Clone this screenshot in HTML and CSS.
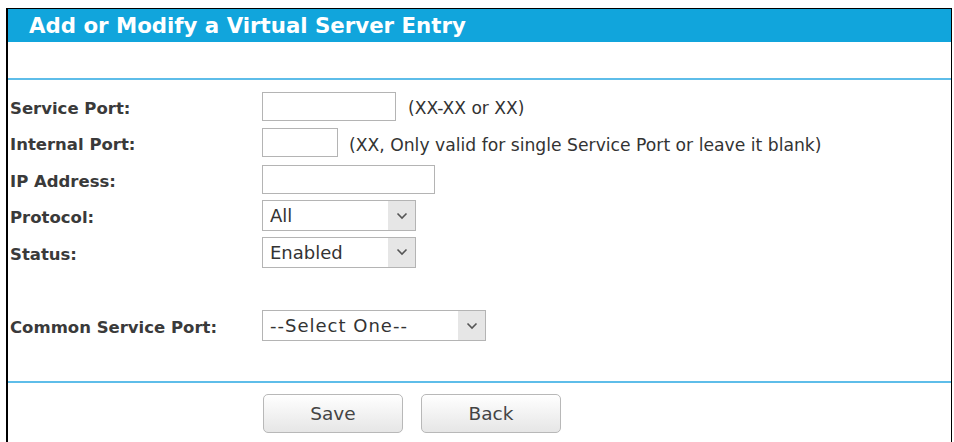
FILE: index.html
```html
<!DOCTYPE html>
<html lang="en">
<head>
  <meta charset="UTF-8">
  <title>Add or Modify a Virtual Server Entry</title>
  <link rel="stylesheet" href="styles.css">
</head>
<body>

  <div class="frame">
    <div class="title">Add or Modify a Virtual Server Entry</div>
    <div class="spacer"></div>

    <form class="entry-form">
      <div class="row">
        <label for="svcPort">Service Port:</label>
        <input type="text" id="svcPort" class="txt w-svc">
        <span class="hint">(XX-XX or XX)</span>
      </div>
      <div class="row">
        <label for="inPort">Internal Port:</label>
        <input type="text" id="inPort" class="txt w-in">
        <span class="hint long">(XX, Only valid for single Service Port or leave it blank)</span>
      </div>
      <div class="row">
        <label for="ipAddr">IP Address:</label>
        <input type="text" id="ipAddr" class="txt w-ip">
      </div>
      <div class="row">
        <label for="protocol">Protocol:</label>
        <span class="sel w-proto">
          <select id="protocol">
            <option>All</option>
            <option>TCP</option>
            <option>UDP</option>
          </select>
          <span class="arrow"><svg width="12" height="8" viewBox="0 0 12 8"><path d="M1.5 1.5 L6 6 L10.5 1.5" fill="none" stroke="#555" stroke-width="1.6"/></svg></span>
        </span>
      </div>
      <div class="row">
        <label for="status">Status:</label>
        <span class="sel w-proto">
          <select id="status">
            <option>Enabled</option>
            <option>Disabled</option>
          </select>
          <span class="arrow"><svg width="12" height="8" viewBox="0 0 12 8"><path d="M1.5 1.5 L6 6 L10.5 1.5" fill="none" stroke="#555" stroke-width="1.6"/></svg></span>
        </span>
      </div>

      <div class="row common">
        <label for="common">Common Service Port:</label>
        <span class="sel w-common">
          <select id="common" class="spaced">
            <option>--Select One--</option>
            <option>DNS</option>
            <option>FTP</option>
            <option>HTTP</option>
          </select>
          <span class="arrow"><svg width="12" height="8" viewBox="0 0 12 8"><path d="M1.5 1.5 L6 6 L10.5 1.5" fill="none" stroke="#555" stroke-width="1.6"/></svg></span>
        </span>
      </div>

      <div class="actions">
        <button type="button" class="btn">Save</button>
        <button type="button" class="btn">Back</button>
      </div>
    </form>
  </div>

</body>
</html>
```

FILE: styles.css
```css
body {
  margin: 0;
  font-family: "DejaVu Sans", Verdana, sans-serif;
  color: #333;
  background: #fff;
}

.frame {
  margin: 8px 0 0 6px;
  width: 943px;
  height: 433px;
  overflow: hidden;
  border-top: 1px solid #000;
  border-left: 2px solid #000;
  border-right: 1px solid #000;
}

.title {
  height: 33px;
  line-height: 33px;
  padding-left: 21px;
  background-color: #11a5dc;
  color: #fff;
  font-size: 21.3px;
  font-weight: bold;
}

.spacer {
  height: 36px;
  border-bottom: 2px solid #5ebde9;
}

.entry-form {
  padding-top: 8px;
}

.row {
  display: flex;
  align-items: center;
  height: 36.5px;
}

.row label {
  width: 252px;
  padding: 4px 0 0 2px;
  font-size: 16.5px;
  font-weight: bold;
  color: #3a3a3a;
}

.row.common {
  margin-top: 37px;
}

.txt {
  box-sizing: border-box;
  height: 29px;
  margin: 0;
  padding: 0 6px;
  border: 1px solid #b4b4b4;
  font-family: inherit;
  font-size: 17px;
  color: #333;
}

.w-svc { width: 134px; }
.w-in { width: 76px; }
.w-ip { width: 173px; }

.hint {
  margin-left: 12px;
  padding-top: 4px;
  font-size: 17.1px;
  color: #333;
}

.hint.long {
  margin-left: 11px;
  font-size: 17.2px;
}

.sel {
  position: relative;
  display: inline-block;
  height: 31px;
}

.sel select {
  -webkit-appearance: none;
  appearance: none;
  box-sizing: border-box;
  width: 100%;
  height: 31px;
  margin: 0;
  padding: 0 30px 0 7px;
  border: 1px solid #b4b4b4;
  border-radius: 0;
  background: #fff;
  font-family: inherit;
  font-size: 18px;
  color: #333;
}

.sel select.spaced {
  letter-spacing: 1px;
}

.sel .arrow {
  position: absolute;
  top: 1px;
  right: 1px;
  bottom: 1px;
  width: 27px;
  display: flex;
  align-items: center;
  justify-content: center;
  background: #e6e6e6;
  pointer-events: none;
}

.w-proto { width: 154px; }
.w-common { width: 224px; }

.actions {
  display: flex;
  gap: 18px;
  margin-top: 37px;
  padding: 11px 0 0 255px;
  border-top: 2px solid #5ebde9;
}

.btn {
  width: 140px;
  height: 39px;
  border: 1px solid #b8b8b8;
  border-radius: 5px;
  background: linear-gradient(#ffffff, #e6e6e6);
  font-family: inherit;
  font-size: 18.5px;
  color: #444;
  cursor: pointer;
}
```
